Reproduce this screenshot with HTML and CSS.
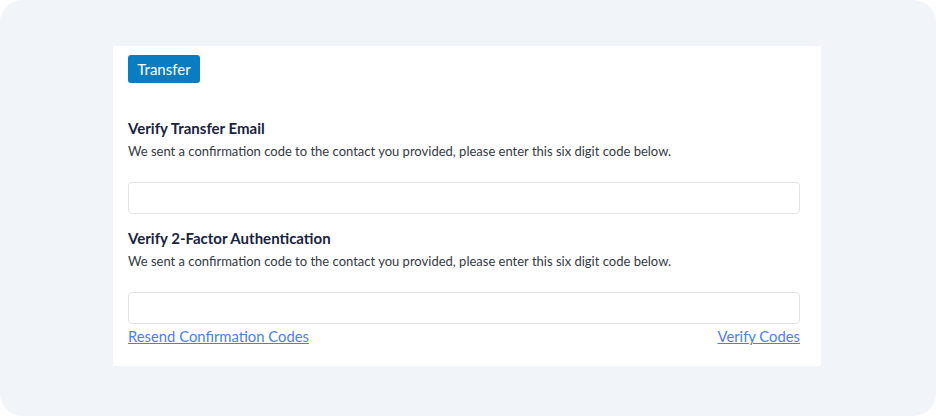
FILE: index.html
```html
<!DOCTYPE html>
<html>
<head>
<meta charset="utf-8">
<link rel="stylesheet" href="styles.css">
</head>
<body>
<div class="frame">
  <div class="card">
    <button class="btn">Transfer</button>
    <section class="block first">
      <h3 class="title">Verify Transfer Email</h3>
      <p class="desc">We sent a confirmation code to the contact you provided, please enter this six digit code below.</p>
      <input class="field" type="text">
    </section>
    <section class="block second">
      <h3 class="title">Verify 2-Factor Authentication</h3>
      <p class="desc">We sent a confirmation code to the contact you provided, please enter this six digit code below.</p>
      <input class="field" type="text">
    </section>
    <div class="links">
      <a href="#" class="link">Resend Confirmation Codes</a>
      <a href="#" class="link">Verify Codes</a>
    </div>
  </div>
</div>
</body>
</html>
```
FILE: styles.css
```css
* { box-sizing: border-box; }
html, body { margin: 0; padding: 0; background: #ffffff; }
body { width: 936px; height: 416px; font-family: Lato, "Noto Sans", sans-serif; }
.frame {
  width: 936px;
  height: 416px;
  background: #f1f4f9;
  border-radius: 22px;
  padding: 46px 115px 50px 113px;
}
.card {
  background: #ffffff;
  width: 708px;
  height: 320px;
  padding: 9px 21px 0 15px;
  display: flex;
  flex-direction: column;
  align-items: flex-start;
}
.btn {
  background: #0a7cc1;
  color: #ffffff;
  border: none;
  border-radius: 3px;
  height: 28px;
  width: 72px;
  font-family: inherit;
  font-size: 15px;
  padding: 0;
}
.block { width: 100%; display: flex; flex-direction: column; }
.block.first { margin-top: 35px; }
.block.second { margin-top: 14px; }
.title {
  margin: 0;
  font-size: 15px;
  line-height: 20px;
  font-weight: 700;
  color: #18233f;
}
.desc {
  margin: 3px 0 0;
  font-size: 13px;
  line-height: 20px;
  color: #333a45;
}
.field {
  margin-top: 21px;
  width: 100%;
  height: 32px;
  border: 1.5px solid #e1e3e6;
  border-radius: 4px;
  background: #fff;
}
.links {
  width: 100%;
  display: flex;
  justify-content: space-between;
  margin-top: 2px;
}
.link {
  color: #4a7ef0;
  font-size: 14.8px;
  line-height: 20px;
  text-decoration: underline;
}
```
